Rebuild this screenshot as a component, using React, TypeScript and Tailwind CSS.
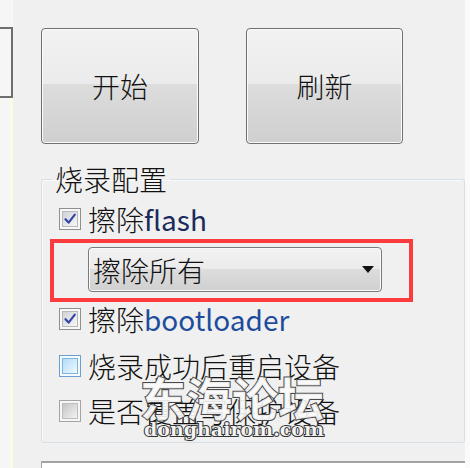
import React from "react";

type Variant = "checked" | "hover" | "disabled";

function CheckBox({ variant }: { variant: Variant }) {
  if (variant === "hover") {
    return (
      <div className="w-[22px] h-[22px] border border-[#6a9fcf] bg-[#f4fbff] p-[2px] shrink-0">
        <div className="w-full h-full border border-[#7fb4de] bg-[linear-gradient(135deg,#b5dcf7_0%,#d6eefc_60%,#eef9ff_100%)]" />
      </div>
    );
  }
  if (variant === "disabled") {
    return (
      <div className="w-[22px] h-[22px] border border-[#a4a4a4] bg-[#f6f6f6] p-[2px] shrink-0">
        <div className="w-full h-full border border-[#bdbdbd] bg-[linear-gradient(135deg,#c4c4c4_0%,#dedede_55%,#f2f2f2_100%)]" />
      </div>
    );
  }
  return (
    <div className="relative w-[22px] h-[22px] border border-[#8e8f8f] bg-[#f8f8f8] p-[2px] shrink-0">
      <div className="w-full h-full border border-[#b9b9b9] bg-[linear-gradient(135deg,#cfd2d6_0%,#e6e7e9_55%,#f7f7f7_100%)]" />
      <svg className="absolute left-[3px] top-[3px]" width="14" height="14" viewBox="0 0 14 14">
        <path d="M2.5 7.2 L5.6 10.6 L11.8 2.6" fill="none" stroke="#3446a6" strokeWidth="2.2" strokeLinejoin="round" strokeLinecap="round" />
      </svg>
    </div>
  );
}

function Row({ variant, children }: { variant: Variant; children: React.ReactNode }) {
  return (
    <div className="flex items-center h-[34px] ml-[17px] gap-[7px]">
      <CheckBox variant={variant} />
      <span className="text-[28px] leading-none text-[#111] whitespace-nowrap">{children}</span>
    </div>
  );
}

const btn =
  "h-[116px] rounded-[4px] border border-[#707070] shadow-[inset_0_0_0_1px_#fbfbfb] bg-[linear-gradient(to_bottom,#f2f2f2_0%,#ebebeb_48%,#dddddd_48%,#cfcfcf_100%)] flex items-center justify-center text-[28px] leading-none text-[#111]";

export default function App() {
  return (
    <div className="relative w-[470px] h-[468px] overflow-hidden bg-[#f0f0f0] flex font-light font-['Noto_Sans_CJK_SC',sans-serif]">
      {/* left edge */}
      <div className="w-[13px] flex flex-col shrink-0">
        <div className="h-[27px] bg-[#f6f6f6]" />
        <div className="h-[71px] bg-[#f6f6f6] border-y-2 border-r-2 border-[#6e6e6e]" />
        <div className="flex-1 flex">
          <div className="flex-1 bg-[#f6f6f6]" />
          <div className="w-[3px] bg-[#fbfbe3]" />
        </div>
      </div>

      {/* main */}
      <div className="w-[424px] ml-[28px] pt-[28px] flex flex-col shrink-0">
        <div className="flex gap-[47px]">
          <div className={`w-[158px] ${btn}`}>开始</div>
          <div className={`w-[157px] ${btn}`}>刷新</div>
        </div>

        <fieldset className="mt-[20px] border border-[#d5dfe5] rounded-[3px] shadow-[inset_1px_1px_0_#fbfbfb] pb-[14px]">
          <legend className="ml-[10px] px-[3px] text-[28px] leading-[30px] text-[#111]">烧录配置</legend>
          <div className="pt-[7px] flex flex-col">
            <div className="flex items-center h-[36px] ml-[17px] gap-[7px]">
              <CheckBox variant="checked" />
              <span className="text-[28px] leading-none text-[#111] whitespace-nowrap">
                擦除<span className="font-normal text-[#1b2b5c]">flash</span>
              </span>
            </div>

            <div className="mt-[2px] ml-[8px] w-[363px] h-[63px] border-[4px] border-[#fb3b3e] pt-[4px] pl-[34px]">
              <div className="w-[294px] h-[45px] rounded-[4px] border border-[#7a7a7a] shadow-[inset_0_0_0_1px_#fafafa] bg-[linear-gradient(to_bottom,#f2f2f2_0%,#ebebeb_48%,#dddddd_48%,#d0d0d0_100%)] flex items-center justify-between pl-[4px] pr-[7px]">
                <span className="text-[28px] leading-none text-[#111]">擦除所有</span>
                <svg width="12" height="7" viewBox="0 0 12 7">
                  <path d="M0 0 H12 L6 7 Z" fill="#111" />
                </svg>
              </div>
            </div>

            <Row variant="checked">
              擦除<span className="font-normal text-[#1e4c9c]">bootloader</span>
            </Row>
            <div className="mt-[13px]">
              <Row variant="hover">烧录成功后重启设备</Row>
            </div>
            <div className="mt-[11px]">
              <Row variant="disabled">是否覆盖写保护设备</Row>
            </div>
          </div>
        </fieldset>

        <div className="mt-[18px] flex-1 bg-white border-t-2 border-l border-[#a3a3a3]" />
      </div>

      {/* right edge */}
      <div className="flex-1 bg-[#fafafa]" />

      {/* watermark */}
      <div className="absolute left-[140px] top-[373px] flex flex-col items-start pointer-events-none">
        <div className="text-[46px] leading-none font-bold text-[rgba(250,250,250,0.93)] [-webkit-text-stroke:2px_#4a4a4a] [paint-order:stroke_fill] whitespace-nowrap">
          东海论坛
        </div>
        <div className="ml-[4px] mt-[1px] text-[19px] leading-none font-bold font-['DejaVu_Serif',serif] text-[rgba(250,250,250,0.95)] [-webkit-text-stroke:2px_#333] [paint-order:stroke_fill] whitespace-nowrap">
          donghairom.com
        </div>
      </div>
    </div>
  );
}
